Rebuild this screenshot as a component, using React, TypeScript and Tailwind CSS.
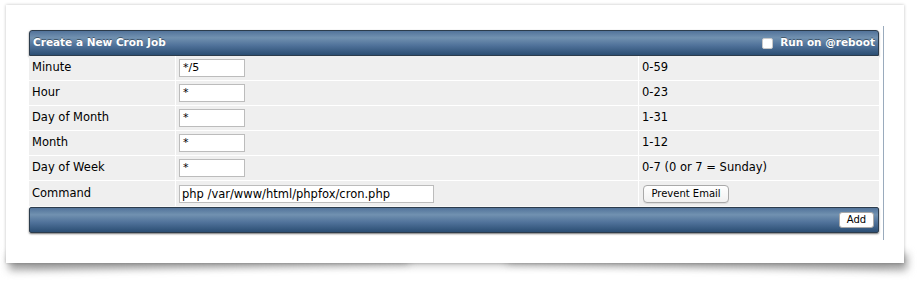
import React from 'react';

const ROWS = [
  { label: 'Minute', value: '*/5', hint: '0-59' },
  { label: 'Hour', value: '*', hint: '0-23' },
  { label: 'Day of Month', value: '*', hint: '1-31' },
  { label: 'Month', value: '*', hint: '1-12' },
  { label: 'Day of Week', value: '*', hint: '0-7 (0 or 7 = Sunday)' },
];

const bar =
  'bg-[linear-gradient(to_bottom,#52739a_0%,#7191b0_28%,#50729a_60%,#2b4e73_100%)] border border-[#2c3c4c] shadow-[0_1px_2px_rgba(0,0,0,0.55)]';

export default function App() {
  return (
    <div className="relative w-[918px] h-[290px] bg-white overflow-hidden font-['DejaVu_Sans',Verdana,sans-serif] text-[11.5px] text-black">
      {/* curved drop shadow under the card */}
      <div className="absolute left-[30px] right-[30px] top-[254px] h-[10px] bg-[#b0b0b0] blur-[5px]" />
      <div className="absolute left-[9px] top-[254px] w-[400px] h-[16px] bg-[#9a9a9a] blur-[4px] -rotate-[1deg] origin-left" />
      <div className="absolute right-[11px] top-[254px] w-[400px] h-[16px] bg-[#9a9a9a] blur-[4px] rotate-[1deg] origin-right" />

      <div className="relative ml-[6px] mt-[5px] w-[898px] h-[258px] bg-white shadow-[0_0_3px_rgba(0,0,0,0.25)]">
        <div className="ml-[23px] pt-[21px] w-[855px]">
          <div className="pt-[4px] pr-[4px] pb-[7px] border-r border-[#9aabbd]">
            {/* header */}
            <div className={`${bar} h-[26px] rounded-t-[3px] flex items-center justify-between pl-[3px] pr-[3px] text-white`}>
              <span className="font-bold text-[10.5px] [text-shadow:0_-1px_0_rgba(0,0,0,0.4)]">Create a New Cron Job</span>
              <label className="flex items-center gap-[7px]">
                <span className="w-[11px] h-[11px] bg-white rounded-[2px] border border-[#c8c8c8]" />
                <span className="font-bold text-[10.5px] [text-shadow:0_-1px_0_rgba(0,0,0,0.4)]">Run on @reboot</span>
              </label>
            </div>

            {ROWS.map((r) => (
              <div key={r.label} className="flex h-[25px] border-b border-white bg-[#efefef]">
                <div className="w-[147px] border-r border-white pl-[3px] flex items-center">{r.label}</div>
                <div className="w-[463px] border-r border-white pl-[3px] flex items-center">
                  <div className="w-[66px] h-[18px] bg-white border border-[#bcbcbc] pl-[3px] leading-[16px] text-[11px]">{r.value}</div>
                </div>
                <div className="flex-1 pl-[3px] flex items-center">{r.hint}</div>
              </div>
            ))}

            <div className="flex h-[25px] bg-[#efefef]">
              <div className="w-[147px] border-r border-white pl-[3px] flex items-center">Command</div>
              <div className="w-[463px] border-r border-white pl-[3px] flex items-center">
                <div className="w-[255px] h-[18px] bg-white border border-[#bcbcbc] pl-[2px] leading-[16px] text-[11.5px]">php /var/www/html/phpfox/cron.php</div>
              </div>
              <div className="flex-1 pl-[4px] flex items-center">
                <button className="h-[18px] w-[86px] rounded-[4px] border border-[#a9a9a9] bg-[linear-gradient(#ffffff,#f1f1f1)] text-[10px] leading-[16px] shadow-[0_1px_0_rgba(0,0,0,0.08)]">
                  Prevent Email
                </button>
              </div>
            </div>

            {/* footer */}
            <div className={`${bar} mt-[1px] h-[26px] rounded-[2px] flex items-center justify-end pr-[4px]`}>
              <button className="h-[16px] w-[35px] rounded-[3px] bg-white border border-[#a9a9a9] text-[10px] leading-[14px]">Add</button>
            </div>
          </div>
        </div>
      </div>
    </div>
  );
}
